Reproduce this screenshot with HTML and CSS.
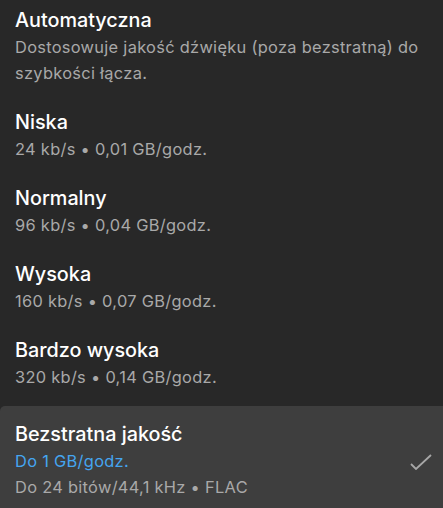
FILE: index.html
```html
<!DOCTYPE html>
<html lang="pl">
<head>
<meta charset="utf-8">
<link rel="stylesheet" href="styles.css">
</head>
<body>
<ul class="list">
  <li class="item">
    <div class="title">Automatyczna</div>
    <div class="sub">Dostosowuje jakość dźwięku (poza bezstratną) do szybkości łącza.</div>
  </li>
  <li class="item">
    <div class="title">Niska</div>
    <div class="sub">24 kb/s • 0,01 GB/godz.</div>
  </li>
  <li class="item">
    <div class="title">Normalny</div>
    <div class="sub">96 kb/s • 0,04 GB/godz.</div>
  </li>
  <li class="item">
    <div class="title">Wysoka</div>
    <div class="sub">160 kb/s • 0,07 GB/godz.</div>
  </li>
  <li class="item">
    <div class="title">Bardzo wysoka</div>
    <div class="sub">320 kb/s • 0,14 GB/godz.</div>
  </li>
  <li class="item selected">
    <div class="text">
      <div class="title">Bezstratna jakość</div>
      <div class="sub accent">Do 1 GB/godz.</div>
      <div class="sub">Do 24 bitów/44,1 kHz • FLAC</div>
    </div>
    <svg class="check" width="22" height="16" viewBox="0 0 22 16"><path d="M1 10 L6 15 L21 1" fill="none" stroke="#a7a7a7" stroke-width="1.8"/></svg>
  </li>
</ul>
</body>
</html>
```
FILE: styles.css
```css
html, body {
  margin: 0;
  padding: 0;
  background: #282828;
  overflow: hidden;
}
.list {
  list-style: none;
  margin: 0;
  padding: 0;
  font-family: Inter, "Noto Sans", sans-serif;
}
.item {
  padding: 6px 15px 16px 15px;
  display: flex;
  flex-direction: column;
}
.title {
  color: #ffffff;
  font-size: 19.8px;
  font-weight: 500;
  line-height: 28px;
}
.sub {
  color: #a9a9a9;
  font-size: 16.4px;
  line-height: 26px;
  letter-spacing: 0.3px;
}
.accent {
  color: #45a5f0;
}
.selected {
  background: #3e3e3e;
  border-radius: 5px 0 0 0;
  flex-direction: row;
  align-items: center;
  justify-content: space-between;
  padding: 14px 11px 20px 15px;
}
.check {
  display: block;
  margin-top: 4px;
}
```
